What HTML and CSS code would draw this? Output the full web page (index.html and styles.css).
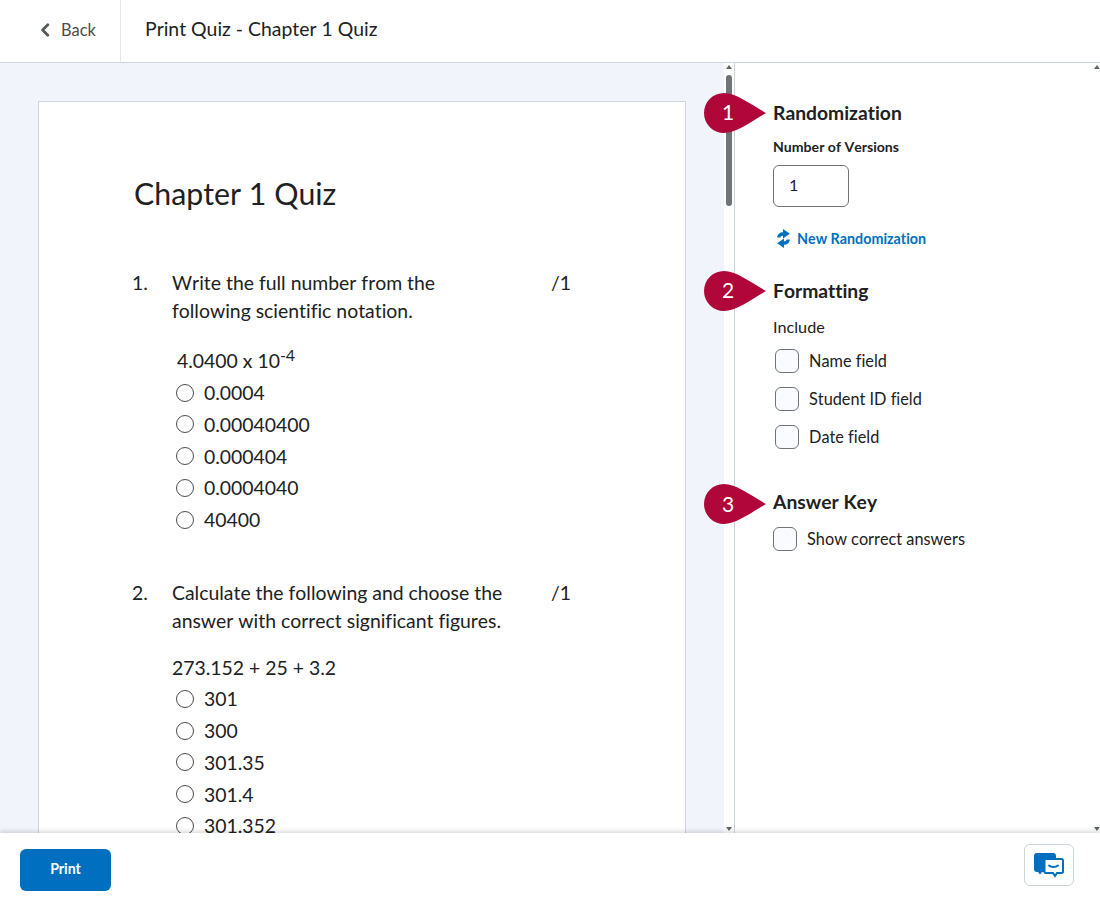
FILE: index.html
```html
<!DOCTYPE html>
<html lang="en">
<head>
    <meta charset="UTF-8">
    <meta name="viewport" content="width=device-width, initial-scale=1.0">
    <title>Print Quiz - Chapter 1 Quiz</title>
    <link rel="stylesheet" href="styles.css">
</head>
<body>

    <header class="topbar">
        <a class="back" href="#">
            <svg class="back-icon" viewBox="0 0 10 14" width="10" height="14"><path d="M7.800 1.800 2.600 7l5.200 5.200" fill="none" stroke="#565a5c" stroke-width="2.800" stroke-linecap="round" stroke-linejoin="round"/></svg>
            <span>Back</span>
        </a>
        <h1 class="page-title">Print Quiz - Chapter 1 Quiz</h1>
    </header>

    <main class="workspace">
        <section class="preview">
            <div class="sheet">
                <h2 class="quiz-title">Chapter 1 Quiz</h2>

                <div class="question">
                    <div class="question-head">
                        <span class="question-num">1.</span>
                        <p class="question-text">Write the full number from the following scientific notation.</p>
                        <span class="question-score">/1</span>
                    </div>
                    <p class="question-data indented">4.0400 x 10<sup>-4</sup></p>
                    <ul class="choices">
                        <li><span class="radio"></span>0.0004</li>
                        <li><span class="radio"></span>0.00040400</li>
                        <li><span class="radio"></span>0.000404</li>
                        <li><span class="radio"></span>0.0004040</li>
                        <li><span class="radio"></span>40400</li>
                    </ul>
                </div>

                <div class="question">
                    <div class="question-head">
                        <span class="question-num">2.</span>
                        <p class="question-text">Calculate the following and choose the answer with correct significant figures.</p>
                        <span class="question-score">/1</span>
                    </div>
                    <p class="question-data">273.152 + 25 + 3.2</p>
                    <ul class="choices">
                        <li><span class="radio"></span>301</li>
                        <li><span class="radio"></span>300</li>
                        <li><span class="radio"></span>301.35</li>
                        <li><span class="radio"></span>301.4</li>
                        <li><span class="radio"></span>301.352</li>
                    </ul>
                </div>
            </div>
        </section>

        <div class="scrollbar">
            <span class="arrow-up"></span>
            <span class="thumb"></span>
            <span class="arrow-down"></span>
        </div>

        <aside class="options">
            <section class="group group-random">
                <h3 class="group-title">
                    <svg class="callout" viewBox="0 0 62 40" width="62" height="40"><path d="M20 0C32 0 48 12 62 20 48 28 32 40 20 40A20 20 0 0 1 20 0Z" fill="#b0063a"/></svg>
                    <span class="callout-num">1</span>
                    Randomization
                </h3>
                <label class="field-label">Number of Versions</label>
                <div class="number-input">1</div>
                <a class="link" href="#">
                    <svg viewBox="0 0 14 18" width="15" height="19"><path d="M1 8C1.300 4.500 3.800 3 6.500 3V0l6.500 4.500L6.500 9V6.300C5 6.300 4.300 7 4 8ZM13 10C12.700 13.500 10.200 15 7.500 15v3L1 13.500 7.500 9v2.700C9 11.700 9.700 11 10 10Z" fill="#006fbf"/></svg>
                    New Randomization
                </a>
            </section>

            <section class="group group-format">
                <h3 class="group-title">
                    <svg class="callout" viewBox="0 0 62 40" width="62" height="40"><path d="M20 0C32 0 48 12 62 20 48 28 32 40 20 40A20 20 0 0 1 20 0Z" fill="#b0063a"/></svg>
                    <span class="callout-num">2</span>
                    Formatting
                </h3>
                <p class="include">Include</p>
                <div class="check-list">
                    <label class="check"><span class="box"></span>Name field</label>
                    <label class="check"><span class="box"></span>Student ID field</label>
                    <label class="check"><span class="box"></span>Date field</label>
                </div>
            </section>

            <section class="group group-key">
                <h3 class="group-title">
                    <svg class="callout" viewBox="0 0 62 40" width="62" height="40"><path d="M20 0C32 0 48 12 62 20 48 28 32 40 20 40A20 20 0 0 1 20 0Z" fill="#b0063a"/></svg>
                    <span class="callout-num">3</span>
                    Answer Key
                </h3>
                <label class="check check-key"><span class="box"></span>Show correct answers</label>
            </section>
        </aside>

        <div class="scrollbar scrollbar-right">
            <span class="arrow-up"></span>
            <span class="arrow-down"></span>
        </div>
    </main>

    <footer class="footer">
        <button class="print-btn">Print</button>
        <button class="chat-btn" aria-label="Feedback">
            <svg viewBox="0 0 30 25" width="30" height="25">
                <path d="M3 0h16a3 3 0 0 1 3 3v13a3 3 0 0 1-3 3H8l-2 2.500L4 19H3a3 3 0 0 1-3-3V3a3 3 0 0 1 3-3Z" fill="#006fbf"/>
                <path d="M12 6h15.500a1.500 1.500 0 0 1 1.500 1.500v11a1.500 1.500 0 0 1-1.500 1.500H23l-2 3-2-3h-7a1.500 1.500 0 0 1-1.500-1.500v-11A1.500 1.500 0 0 1 12 6Z" fill="#fff" stroke="#006fbf" stroke-width="2"/>
                <path d="M15 12.500c2.500 2 6.500 2 9 0" fill="none" stroke="#006fbf" stroke-width="2" stroke-linecap="round"/>
            </svg>
        </button>
    </footer>

</body>
</html>
```

FILE: styles.css
```css
* { margin: 0; padding: 0; box-sizing: border-box; }
html, body { height: 100%; }
body { display: flex; flex-direction: column; height: 905px; overflow: hidden; background: #fff; color: #202122; font-family: Lato, "Noto Sans", sans-serif; font-kerning: none; font-variant-ligatures: none; }

/* Top bar */
.topbar { display: flex; align-items: stretch; height: 63px; flex-shrink: 0; border-bottom: 1px solid #cdd5dc; background: #fff; }
.back { display: flex; align-items: center; gap: 11px; width: 121px; padding-left: 40px; padding-bottom: 3px; border-right: 1px solid #e6eaf0; color: #494c4e; font-size: 16.4px; text-decoration: none; }
.page-title { display: flex; align-items: center; padding-left: 24px; padding-bottom: 5px; font-size: 19.4px; font-weight: 400; color: #202122; }

/* Main area */
.workspace { display: flex; flex: 1; min-height: 0; overflow: hidden; }
.preview { width: 724px; flex-shrink: 0; padding: 38px 38px 0; background: #f1f5fb; overflow: hidden; }
.sheet { width: 648px; min-height: 900px; padding: 70px 0 0 93px; background: #fff; border: 1px solid #cdd5dc; }
.quiz-title { font-size: 30.3px; font-weight: 400; line-height: 42px; margin-left: 2px; margin-bottom: 55px; }

.question { margin-bottom: 43.1px; font-size: 19.4px; }
.question-head { display: flex; line-height: 28px; }
.question-num { width: 40px; flex-shrink: 0; }
.question-text { width: 379px; padding-right: 40px; flex-shrink: 0; }
.question-data { margin-top: 19.4px; margin-bottom: 1px; margin-left: 40px; line-height: 28px; }
.question-data.indented { margin-top: 22.4px; margin-bottom: 1.3px; margin-left: 45px; }
.question-data sup { font-size: 16px; line-height: 0; vertical-align: 7px; }

.choices { list-style: none; margin-left: 44px; }
.choices li { display: flex; align-items: center; gap: 10px; height: 31.75px; }
.radio { width: 18px; height: 18px; border: 1px solid #494c4e; border-radius: 50%; background: #fff; flex-shrink: 0; }

/* Scrollbars */
.scrollbar { position: relative; display: flex; flex-direction: column; align-items: center; width: 10px; flex-shrink: 0; padding-top: 2px; background: #fff; }
.arrow-up { width: 0; height: 0; border-left: 3.500px solid transparent; border-right: 3.500px solid transparent; border-bottom: 4px solid #5f6466; }
.arrow-down { width: 0; height: 0; margin-top: auto; margin-bottom: 2px; border-left: 3.500px solid transparent; border-right: 3.500px solid transparent; border-top: 4px solid #5f6466; }
.thumb { width: 6px; height: 131px; margin-top: 6px; border-radius: 3px; background: #6e7477; }
.scrollbar-right { width: 6px; margin-left: -6px; background: transparent; }

/* Options panel */
.options { flex: 1; min-width: 0; padding: 38px 0 0 38px; border-left: 1px solid #cdd5dc; background: #fff; }
.group-title { position: relative; font-size: 19.3px; font-weight: 700; line-height: 24px; }
.callout { position: absolute; left: -69px; top: -8px; }
.callout-num { position: absolute; left: -51px; top: -1px; width: 12px; color: #fff; font-size: 21px; font-weight: 400; text-align: center; }
.group-key .callout { top: -6px; }
.group-key .callout-num { top: 2px; }

.group-random { height: 178px; }
.field-label { display: block; margin-top: 12px; font-size: 14.1px; font-weight: 700; line-height: 20px; }
.number-input { width: 76px; height: 42px; margin-top: 8px; padding-left: 15px; border: 1px solid #6e7477; border-radius: 6px; font-size: 16px; line-height: 38px; }
.link { display: flex; align-items: center; gap: 6px; height: 21px; margin-top: 21px; margin-left: 3px; color: #006fbf; font-size: 14.3px; font-weight: 700; text-decoration: none; }

.group-format { height: 211px; }
.include { margin-top: 12px; font-size: 16.2px; line-height: 24px; }
.check-list { display: flex; flex-direction: column; gap: 14px; margin-top: 9px; margin-left: 2px; }
.check { display: flex; align-items: center; gap: 10px; height: 24px; font-size: 16.3px; }
.box { width: 24px; height: 24px; margin-top: 2px; border: 1px solid #6e7477; border-radius: 6px; background: #f9fbff; flex-shrink: 0; }
.check-key { margin-top: 12px; }

/* Footer */
.footer { position: relative; display: flex; justify-content: space-between; align-items: center; height: 72px; flex-shrink: 0; padding: 0 26px 0 20px; background: #fff; box-shadow: 0 -2px 4px rgba(0, 0, 0, 0.14); }
.print-btn { width: 91px; height: 42px; margin-top: 2px; padding-bottom: 3px; border: none; border-radius: 6px; background: #006fbf; color: #fff; font-family: inherit; font-size: 14.2px; font-weight: 700; }
.chat-btn { display: flex; align-items: center; justify-content: center; width: 50px; height: 42px; margin-bottom: 8px; border: 1px solid #cdd5dc; border-radius: 6px; background: #fff; }
```
